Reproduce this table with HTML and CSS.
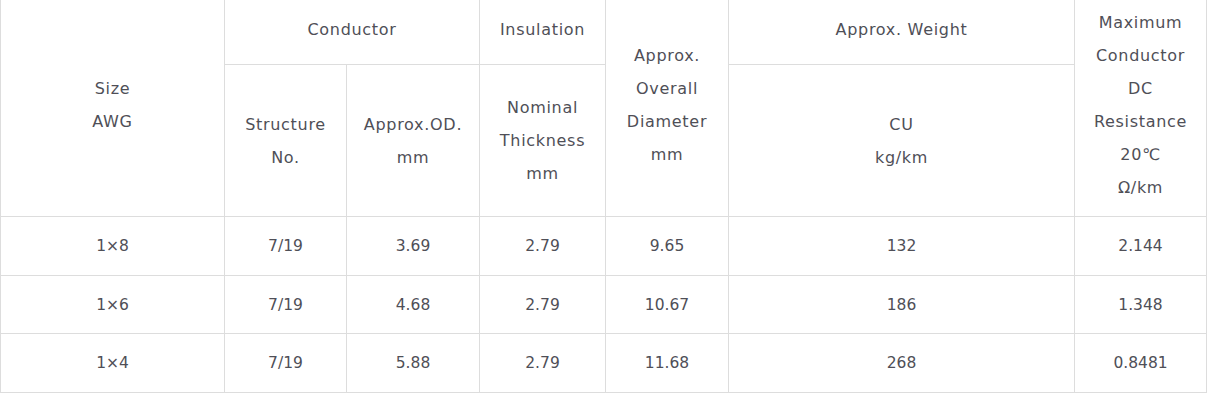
FILE: index.html
```html
<!DOCTYPE html>
<html>
<head>
<meta charset="utf-8">
<link rel="stylesheet" href="styles.css">
</head>
<body>
<table class="spec">
  <colgroup>
    <col class="c1"><col class="c2"><col class="c3"><col class="c4"><col class="c5"><col class="c6"><col class="c7">
  </colgroup>
  <thead>
    <tr class="h1">
      <th rowspan="2">Size<br>AWG</th>
      <th colspan="2">Conductor</th>
      <th>Insulation</th>
      <th rowspan="2">Approx.<br>Overall<br>Diameter<br>mm</th>
      <th>Approx. Weight</th>
      <th rowspan="2">Maximum<br>Conductor<br>DC<br>Resistance<br>20℃<br>Ω/km</th>
    </tr>
    <tr class="h2">
      <th>Structure<br>No.</th>
      <th>Approx.OD.<br>mm</th>
      <th>Nominal<br>Thickness<br>mm</th>
      <th>CU<br>kg/km</th>
    </tr>
  </thead>
  <tbody>
    <tr><td>1×8</td><td>7/19</td><td>3.69</td><td>2.79</td><td>9.65</td><td>132</td><td>2.144</td></tr>
    <tr class="short"><td>1×6</td><td>7/19</td><td>4.68</td><td>2.79</td><td>10.67</td><td>186</td><td>1.348</td></tr>
    <tr><td>1×4</td><td>7/19</td><td>5.88</td><td>2.79</td><td>11.68</td><td>268</td><td>0.8481</td></tr>
  </tbody>
</table>
</body>
</html>
```
FILE: styles.css
```css
html, body {
  margin: 0;
  padding: 0;
  background: #fff;
}
body {
  font-family: "DejaVu Sans", "Open Sans", sans-serif;
  font-size: 15.5px;
  color: #4f4f57;
}
.spec {
  border-collapse: collapse;
  table-layout: fixed;
  width: 1206px;
  margin-top: -7px;
}
.c1 { width: 224px; }
.c2 { width: 122px; }
.c3 { width: 133px; }
.c4 { width: 126px; }
.c5 { width: 123px; }
.c6 { width: 346px; }
.c7 { width: 132px; }
.spec th, .spec td {
  border: 1px solid #dddddd;
  text-align: center;
  vertical-align: middle;
  font-weight: 400;
  line-height: 33px;
  padding: 0;
}
.spec td {
  padding-top: 1px;
}
.spec th {
  font-size: 16px;
  letter-spacing: 0.7px;
}
.h1 { height: 71px; }
.h2 { height: 152px; }
.spec tbody tr { height: 59px; }
.spec tbody tr.short { height: 58px; }
```
